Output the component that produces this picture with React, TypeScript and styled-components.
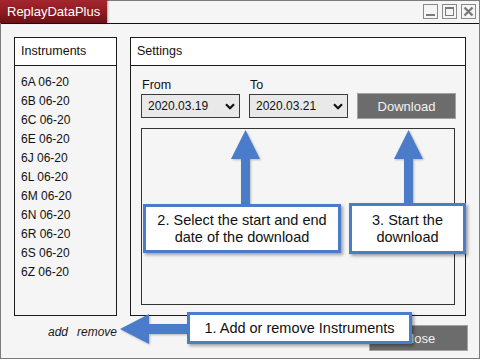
import styled, { createGlobalStyle } from "styled-components";

const GlobalStyle = createGlobalStyle`
  html, body {
    margin: 0;
    padding: 0;
    background: #ffffff;
  }
  body {
    font-family: "Liberation Sans", Arial, sans-serif;
    color: #111;
  }
`;

const BLUE = "#4b7cca";

const Stage = styled.div`
  position: relative;
  width: 480px;
  height: 360px;
`;

const Window = styled.div`
  box-sizing: border-box;
  width: 480px;
  height: 359px;
  border: 1px solid #7b7b7b;
  background: #f5f5f5;
  display: flex;
  flex-direction: column;
`;

const TitleBar = styled.div`
  display: flex;
  align-items: flex-start;
  justify-content: space-between;
  height: 22px;
  border-bottom: 1px solid #111;
`;

const TitleTab = styled.div`
  box-sizing: border-box;
  margin: -1px 0 0 -1px;
  width: 107px;
  height: 23px;
  padding-left: 7px;
  line-height: 23px;
  font-size: 13px;
  color: #ffffff;
  background: linear-gradient(to bottom, #a4262e 0%, #8c1a21 55%, #6e1016 100%);
  box-shadow: 1px 0 2px rgba(0, 0, 0, 0.35);
`;

const Controls = styled.div`
  display: flex;
  gap: 4px;
  margin: 3px 3px 0 0;
`;

const WinButton = styled.div`
  box-sizing: border-box;
  width: 15px;
  height: 15px;
  border: 1px solid #8a8a8a;
  display: flex;
  align-items: center;
  justify-content: center;
`;

const Body = styled.div`
  flex: 1;
  display: flex;
  flex-direction: column;
  padding: 13px 13px 0 13px;
`;

const Columns = styled.div`
  display: grid;
  grid-template-columns: 103px 336px;
  column-gap: 13px;
  height: 279px;
`;

const Panel = styled.section`
  box-sizing: border-box;
  display: flex;
  flex-direction: column;
  border: 1px solid #1b1b1b;
`;

const PanelHeader = styled.div`
  height: 27px;
  line-height: 27px;
  padding-left: 6px;
  font-size: 12.5px;
  background: #ffffff;
  border-bottom: 1px solid #1b1b1b;
`;

const InstrumentList = styled.ul`
  list-style: none;
  margin: 0;
  padding: 7px 0 0 6px;
`;

const InstrumentItem = styled.li`
  font-size: 12px;
  line-height: 19px;
`;

const SettingsBody = styled.div`
  flex: 1;
  display: flex;
  flex-direction: column;
  padding: 12px 10px 10px 10px;
`;

const FieldGrid = styled.div`
  display: grid;
  grid-template-columns: repeat(3, 99px);
  column-gap: 9px;
  row-gap: 1px;
  align-items: center;
`;

const FieldLabel = styled.div`
  font-size: 12.5px;
  line-height: 14px;
  padding-left: 1px;
`;

const SelectBox = styled.div`
  box-sizing: border-box;
  height: 24px;
  display: flex;
  align-items: center;
  justify-content: space-between;
  padding: 0 4px 0 6px;
  border: 1px solid #3a3a3a;
  background: #e9e9e9;
  font-size: 12px;
`;

const GrayButton = styled.div`
  box-sizing: border-box;
  width: 99px;
  height: 26px;
  display: flex;
  align-items: center;
  justify-content: center;
  background: #6c6c6c;
  border: 1px solid #a2a2a2;
  color: #f2f2f2;
  font-size: 13px;
`;

const DownloadArea = styled.div`
  flex: 1;
  margin-top: 9px;
  border: 1px solid #333;
`;

const Footer = styled.div`
  display: flex;
  justify-content: space-between;
  align-items: flex-start;
  margin: 9px -2px 0 0;
`;

const ItemLinks = styled.div`
  width: 103px;
  display: flex;
  justify-content: flex-end;
  gap: 9px;
  font-size: 12px;
  font-style: italic;
  line-height: 14px;
  color: #1a1a1a;
`;

const ArrowLayer = styled.svg`
  position: absolute;
  left: 0;
  top: 0;
  pointer-events: none;
  filter: drop-shadow(1px 1px 1px rgba(0, 0, 0, 0.25));
`;

const Callout = styled.div<{ $x: number; $y: number; $w: number; $h: number }>`
  position: absolute;
  left: ${(p) => p.$x}px;
  top: ${(p) => p.$y}px;
  width: ${(p) => p.$w}px;
  height: ${(p) => p.$h}px;
  box-sizing: border-box;
  display: flex;
  align-items: center;
  justify-content: center;
  text-align: center;
  background: #ffffff;
  border: 3px solid ${BLUE};
  box-shadow: 2px 2px 3px rgba(0, 0, 0, 0.35);
  font-size: 14.5px;
  line-height: 17px;
  color: #111;
`;

const Chevron = () => (
  <svg width="10" height="7" viewBox="0 0 10 7">
    <path d="M1 1.2 L5 5.2 L9 1.2" fill="none" stroke="#111" strokeWidth="2.2" />
  </svg>
);

const instruments = [
  "6A 06-20",
  "6B 06-20",
  "6C 06-20",
  "6E 06-20",
  "6J 06-20",
  "6L 06-20",
  "6M 06-20",
  "6N 06-20",
  "6R 06-20",
  "6S 06-20",
  "6Z 06-20"
];

export default function App() {
  return (
    <Stage>
      <GlobalStyle />
      <Window>
        <TitleBar>
          <TitleTab>ReplayDataPlus</TitleTab>
          <Controls>
            <WinButton>
              <svg width="13" height="13" viewBox="0 0 13 13">
                <rect x="2" y="9" width="9" height="2" fill="#7a7a7a" />
              </svg>
            </WinButton>
            <WinButton>
              <svg width="13" height="13" viewBox="0 0 13 13">
                <rect x="2.5" y="2.5" width="8" height="8" fill="none" stroke="#7a7a7a" />
                <rect x="2" y="2" width="9" height="2" fill="#7a7a7a" />
              </svg>
            </WinButton>
            <WinButton>
              <svg width="13" height="13" viewBox="0 0 13 13">
                <path d="M2.5 2.5 L10.5 10.5 M10.5 2.5 L2.5 10.5" stroke="#7a7a7a" strokeWidth="2.4" />
              </svg>
            </WinButton>
          </Controls>
        </TitleBar>
        <Body>
          <Columns>
            <Panel>
              <PanelHeader>Instruments</PanelHeader>
              <InstrumentList>
                {instruments.map((name) => (
                  <InstrumentItem key={name}>{name}</InstrumentItem>
                ))}
              </InstrumentList>
            </Panel>
            <Panel>
              <PanelHeader>Settings</PanelHeader>
              <SettingsBody>
                <FieldGrid>
                  <FieldLabel>From</FieldLabel>
                  <FieldLabel>To</FieldLabel>
                  <div />
                  <SelectBox>
                    2020.03.19
                    <Chevron />
                  </SelectBox>
                  <SelectBox>
                    2020.03.21
                    <Chevron />
                  </SelectBox>
                  <GrayButton>Download</GrayButton>
                </FieldGrid>
                <DownloadArea />
              </SettingsBody>
            </Panel>
          </Columns>
          <Footer>
            <ItemLinks>
              <span>add</span>
              <span>remove</span>
            </ItemLinks>
            <GrayButton>Close</GrayButton>
          </Footer>
        </Body>
      </Window>

      <ArrowLayer width="480" height="360" viewBox="0 0 480 360">
        <polygon
          points="245.5,130 260,159 250,159 250,206 241,206 241,159 231,159"
          fill={BLUE}
        />
        <polygon
          points="408.5,130 423,159 413,159 413,205 404,205 404,159 394,159"
          fill={BLUE}
        />
        <polygon
          points="120,329 149,314 149,324 190,324 190,334 149,334 149,344"
          fill={BLUE}
        />
      </ArrowLayer>

      <Callout $x={143} $y={204} $w={198} $h={49}>
        2. Select the start and end
        <br />
        date of the download
      </Callout>
      <Callout $x={349} $y={203} $w={117} $h={51}>
        3. Start the
        <br />
        download
      </Callout>
      <Callout $x={187} $y={312} $w={225} $h={32}>
        1. Add or remove Instruments
      </Callout>
    </Stage>
  );
}
